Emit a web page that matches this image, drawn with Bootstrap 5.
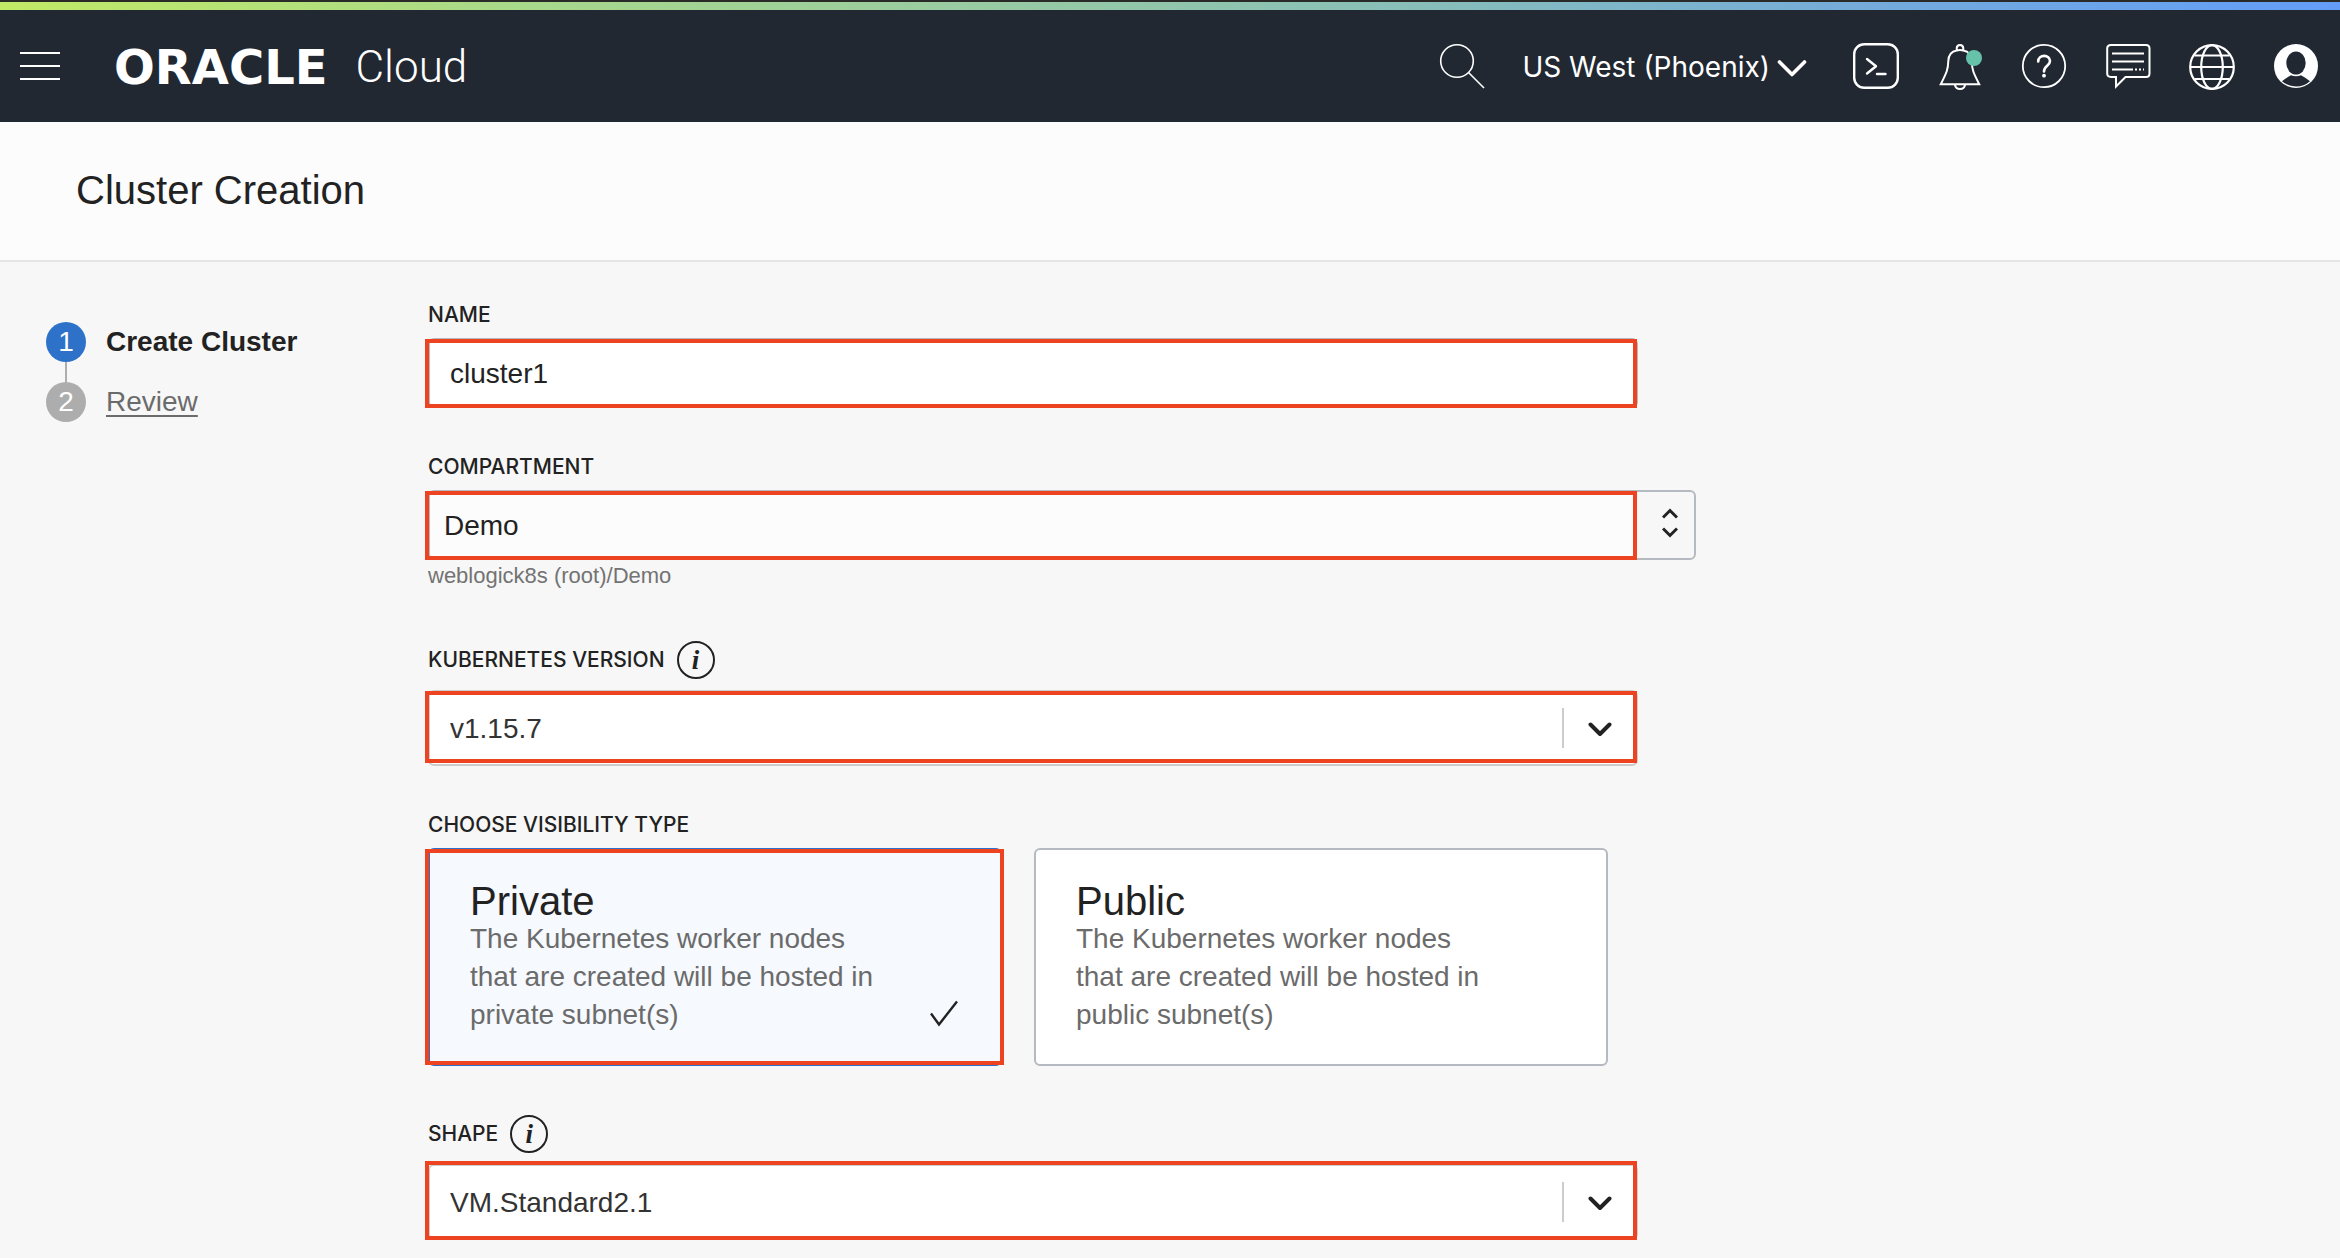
<!DOCTYPE html>
<html lang="en">
<head>
<meta charset="utf-8">
<meta name="viewport" content="width=device-width, initial-scale=1">
<title>Cluster Creation</title>
<link href="https://cdn.jsdelivr.net/npm/bootstrap@5.3.0/dist/css/bootstrap.min.css" rel="stylesheet">
<style>
  body { font-family: "Liberation Sans", Arial, sans-serif; font-size: 28px; line-height: 38px; color: #222; background: #f7f7f7; }
  svg { display: block; fill: none; stroke: currentColor; }
  .accent-bar { height: 10px; border-top: 2px solid #2a2a28; background: linear-gradient(90deg, #c1ea66 0%, #a9d98a 22%, #88bfb8 60%, #74abdb 80%, #639df8 100%); }
  .topbar { height: 112px; padding: 0 20px; background: #212832; color: #fff; }
  .icon-btn { border: 0; padding: 0; background: none; color: inherit; }
  .brand-link { color: #fff; gap: 28px; margin-left: 54px; padding-top: 2px; line-height: 48px; }
  .brand-name { font: bold 48px/48px "DejaVu Sans", sans-serif; }
  .brand-product { font: 300 44px/48px Roboto, sans-serif; }
  .tools { gap: 36px; }
  .region-btn { font-family: Inter, sans-serif; gap: 6px; margin-right: 8px; padding-top: 2px; }
  .page-head { height: 140px; padding: 0 76px 2px; background: #fcfcfc; border-bottom: 2px solid #e5e5e5; }
  .page-title { font-size: 40px; line-height: 48px; font-weight: 400; }
  .steps { width: 428px; padding: 60px 24px 0 46px; }
  .step { gap: 20px; height: 40px; color: #6b6b6b; }
  .step + .step { margin-top: 20px; }
  .step-dot { width: 40px; height: 40px; border-radius: 50%; background: #adadad; color: #fff; }
  .step-active { color: #222; font-weight: 700; }
  .step-active .step-dot { background: #2d71c9; font-weight: 400; }
  .step + .step::before { content: ""; position: absolute; left: 19px; top: -20px; width: 2px; height: 20px; background: #adadad; }
  .step-link { color: inherit; text-underline-offset: 4px; text-decoration-thickness: 2px; }
  .wizard-form { max-width: 1268px; padding: 41px 0 18px; }
  .field { max-width: 1210px; margin-bottom: 47px; }
  .field-wide { max-width: 1268px; margin-bottom: 49px; }
  .field-cards { margin-bottom: 49px; }
  .field-label { font: 500 21px/24px Inter, sans-serif; }
  .label-row { gap: 12px; margin-bottom: 11px; }
  .info-btn { width: 38px; height: 38px; border: 2px solid #222; border-radius: 50%; padding: 0; background: none; color: #222; font: italic bold 27px/34px "Liberation Serif", serif; }
  .control { width: 100%; height: 70px; border: 2px solid #b5b9c0; border-radius: 6px; padding: 2px 20px 0; background: #fff; color: #222; appearance: none; }
  .control-select { height: 76px; border-color: #ccc; color: #333; }
  .control-wide { padding: 2px 14px 0; background: linear-gradient(90deg, #fcfcfc calc(100% - 60px), #f7f7f7 0); }
  .hint { font-size: 22px; line-height: 32px; color: #737373; }
  .marked { position: relative; }
  .marked::after { content: ""; position: absolute; inset: 1px 1px 0 -3px; border: 4px solid #ed4320; pointer-events: none; }
  .marked-wide::after { right: 59px; }
  .marked-version::after { bottom: 3px; }
  .marked-shape::after { top: -3px; }
  .marked-card::after { right: -2px; bottom: 1px; }
  .chevron-cell { position: absolute; right: 2px; top: 18px; width: 74px; height: 40px; border-left: 2px solid #ccc; padding-top: 2px; pointer-events: none; }
  .sort-cell { position: absolute; right: 18px; top: 18px; pointer-events: none; }
  .choices { gap: 32px; padding-right: 30px; }
  .choice { flex: 1 1 0; gap: 48px; border: 2px solid #b5b9c0; border-radius: 6px; padding: 32px 40px 30px; background: #fff; cursor: pointer; }
  .choice-on { border-color: #2d71c9; background: #f6f9fe; }
  .choice-title { font-size: 40px; }
  .choice-text { color: #6b6b6b; }
  .choice-tick { margin-bottom: 6px; }
</style>
</head>
<body>
<div class="accent-bar"></div>
<header class="topbar d-flex align-items-center">
  <button class="icon-btn" type="button" aria-label="Menu">
    <svg width="40" height="28" stroke-width="2"><path d="M0 1H40M0 14H40M0 27H40"/></svg>
  </button>
  <a class="brand-link d-flex align-items-center text-decoration-none" href="#"><span class="brand-name">ORACLE</span><span class="brand-product">Cloud</span></a>
  <div class="tools d-flex align-items-center ms-auto">
    <button class="icon-btn" type="button" aria-label="Search">
      <svg width="48" height="48" stroke-width="1.6"><circle cx="19" cy="19" r="16.3"/><path d="M30.500 30.500L46 46"/></svg>
    </button>
    <button class="icon-btn region-btn d-flex align-items-center" type="button">US West (Phoenix)
      <svg width="32" height="32" stroke-width="3.6" stroke-linecap="round" stroke-linejoin="round"><path d="M3.500 11L16 23.500L28.500 11"/></svg>
    </button>
    <button class="icon-btn" type="button" aria-label="Cloud Shell">
      <svg width="48" height="48" stroke-width="2.400" stroke-linecap="round" stroke-linejoin="round"><rect x="2.200" y="2.200" width="43.600" height="43.600" rx="10"/><path d="M15 17L24 24.300L15 31.500M25 32H33.500"/></svg>
    </button>
    <button class="icon-btn" type="button" aria-label="Announcements">
      <svg width="48" height="48" stroke-width="2"><path d="M20.700 8.500V6.500Q20.700 3 24 3Q27.300 3 27.300 6.500V8.500M20.700 8.500C15 9.500 12.500 14 12.300 19C12.100 27 11 30 4.800 42.200H43.200C37.500 31 36 28 35.700 19C35.500 14 33 9.500 27.300 8.500Q24 7.600 20.700 8.500M19 43Q19.700 47 24 47Q28.300 47 29 43"/><circle cx="38" cy="16" r="8" fill="#66c3a9" stroke="none"/></svg>
    </button>
    <button class="icon-btn" type="button" aria-label="Help">
      <svg width="48" height="48"><circle cx="24" cy="24" r="21.200" stroke-width="1.800"/><path d="M18.200 19.500C18.400 12 30 12.200 30 19C30 24 24 23.500 24 29.500" stroke-width="2.600" stroke-linecap="round"/><circle cx="24" cy="33.700" r="1.900" fill="#fff" stroke="none"/></svg>
    </button>
    <button class="icon-btn" type="button" aria-label="Feedback">
      <svg width="48" height="48" stroke-width="2"><path d="M7 3H42Q45.500 3 45.500 6.500V31.500Q45.500 35 42 35H21.500L12 44.500V35H7Q3.200 35 3.200 31.500V6.500Q3.200 3 7 3Z"/><path d="M8 11.500H40M8 19.500H40M8 27.500H29" /><path d="M31 27.500H40" stroke-dasharray="2 2"/></svg>
    </button>
    <button class="icon-btn" type="button" aria-label="Language">
      <svg width="48" height="48" stroke-width="2.200"><circle cx="24" cy="25" r="21.800"/><ellipse cx="24" cy="25" rx="10.800" ry="21.800"/><path d="M2 25H46M6.500 13.500H41.500M6.500 37H41.500"/></svg>
    </button>
    <button class="icon-btn" type="button" aria-label="Profile">
      <svg width="48" height="48"><circle cx="24" cy="24" r="22" fill="#fff" stroke="none"/><ellipse cx="24" cy="21" rx="9.700" ry="11.500" fill="#212832" stroke="none"/><path d="M10 39.200Q13 36.500 19 33.200Q24 35.200 29 33.200Q35 36.500 38 39.200Q32 44.500 24 44.500Q16 44.500 10 39.200Z" fill="#212832" stroke="none"/></svg>
    </button>
  </div>
</header>
<div class="page-head d-flex align-items-center"><h1 class="page-title mb-0">Cluster Creation</h1></div>
<div class="d-flex">
  <nav class="steps flex-shrink-0" aria-label="Steps">
    <div class="step step-active d-flex align-items-center"><span class="step-dot d-flex align-items-center justify-content-center">1</span>Create Cluster</div>
    <div class="step position-relative d-flex align-items-center"><span class="step-dot d-flex align-items-center justify-content-center">2</span><a class="step-link" href="#">Review</a></div>
  </nav>
  <form class="wizard-form flex-grow-1">
    <div class="field">
      <div class="label-row d-flex"><label class="field-label" for="name">NAME</label></div>
      <div class="marked"><input class="control" id="name" type="text" value="cluster1"></div>
    </div>
    <div class="field field-wide">
      <div class="label-row d-flex"><label class="field-label" for="compartment">COMPARTMENT</label></div>
      <div class="marked marked-wide">
        <select class="control control-wide" id="compartment"><option>Demo</option></select>
        <svg class="sort-cell" width="16" height="30" stroke-width="3"><path d="M1 9.500L8 2.500L15 9.500M1 20.500L8 27.500L15 20.500"/></svg>
      </div>
      <div class="hint">weblogick8s (root)/Demo</div>
    </div>
    <div class="field">
      <div class="label-row d-flex align-items-center"><label class="field-label" for="version">KUBERNETES VERSION</label><button class="info-btn" type="button" aria-label="About Kubernetes version">i</button></div>
      <div class="marked marked-version">
        <select class="control control-select" id="version"><option>v1.15.7</option></select>
        <span class="chevron-cell d-flex align-items-center justify-content-center"><svg width="24" height="16" stroke-width="4" stroke-linecap="round" stroke-linejoin="round"><path d="M2.500 3.500L12 13L21.500 3.500"/></svg></span>
      </div>
    </div>
    <div class="field field-cards" role="radiogroup" aria-labelledby="visibility">
      <div class="label-row d-flex"><span class="field-label" id="visibility">CHOOSE VISIBILITY TYPE</span></div>
      <div class="choices d-flex">
        <div class="marked marked-card d-flex flex-fill w-50">
          <input class="btn-check" type="radio" name="visibility" id="private" checked>
          <label class="choice choice-on d-flex align-items-end" for="private">
            <span class="flex-fill"><span class="choice-title d-block">Private</span><span class="choice-text d-block">The Kubernetes worker nodes that are created will be hosted in private subnet(s)</span></span>
            <svg class="choice-tick flex-shrink-0" width="30" height="28" stroke-width="2.400"><path d="M1 13.500L9 24.500L27 1.500"/></svg>
          </label>
        </div>
        <div class="d-flex flex-fill w-50">
          <input class="btn-check" type="radio" name="visibility" id="public">
          <label class="choice d-flex align-items-end" for="public">
            <span class="flex-fill"><span class="choice-title d-block">Public</span><span class="choice-text d-block">The Kubernetes worker nodes that are created will be hosted in public subnet(s)</span></span>
            <svg class="choice-tick flex-shrink-0" width="30" height="28"></svg>
          </label>
        </div>
      </div>
    </div>
    <div>
      <div class="label-row d-flex align-items-center"><label class="field-label" for="shape">SHAPE</label><button class="info-btn" type="button" aria-label="About shape">i</button></div>
      <div class="field marked marked-shape mb-0">
        <select class="control control-select" id="shape"><option>VM.Standard2.1</option></select>
        <span class="chevron-cell d-flex align-items-center justify-content-center"><svg width="24" height="16" stroke-width="4" stroke-linecap="round" stroke-linejoin="round"><path d="M2.500 3.500L12 13L21.500 3.500"/></svg></span>
      </div>
    </div>
  </form>
</div>
<script src="https://cdn.jsdelivr.net/npm/bootstrap@5.3.0/dist/js/bootstrap.bundle.min.js"></script>
</body>
</html>
